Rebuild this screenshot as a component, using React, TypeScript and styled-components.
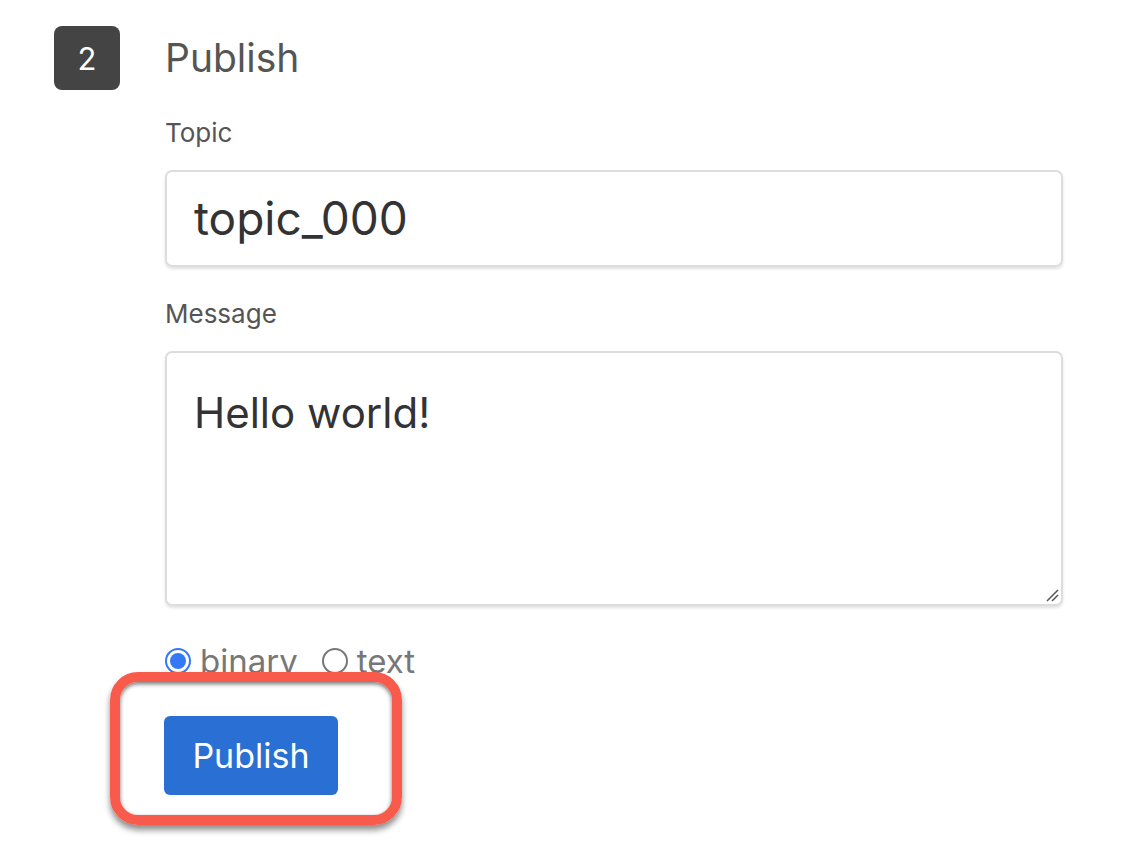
import React from 'react';
import styled, { createGlobalStyle } from 'styled-components';

const GlobalStyle = createGlobalStyle`
    body {
        margin: 0;
        background: #ffffff;
        font-family: Inter, "Noto Sans", sans-serif;
    }
`;

const Page = styled.div`
    position: relative;
    width: 1128px;
    height: 858px;
    overflow: hidden;
    background: #ffffff;
`;

const Step = styled.section`
    display: flex;
    align-items: flex-start;
    padding: 26px 0 0 54px;
`;

const Badge = styled.div`
    width: 66px;
    height: 64px;
    border-radius: 8px;
    background: #444444;
    color: #ffffff;
    font-size: 31px;
    display: flex;
    align-items: center;
    justify-content: center;
    flex-shrink: 0;
`;

const Body = styled.div`
    margin-left: 45px;
    width: 898px;
    display: flex;
    flex-direction: column;
`;

const Heading = styled.h2`
    margin: 8px 0 0;
    font-size: 39px;
    font-weight: 400;
    color: #555555;
    line-height: 48px;
`;

const Label = styled.label<{ $top: number }>`
    display: block;
    margin-top: ${({ $top }) => $top}px;
    font-size: 26px;
    color: #555555;
    line-height: 30px;
`;

const Field = styled.div<{ $height: number; $size: number }>`
    margin-top: 22px;
    height: ${({ $height }) => $height}px;
    border: 2px solid #dddddd;
    border-radius: 7px;
    box-shadow: 0 2px 3px rgba(0, 0, 0, 0.12);
    box-sizing: border-box;
    padding: 0 27px;
    font-size: ${({ $size }) => $size}px;
    color: #333333;
    position: relative;
`;

const InputText = styled.div`
    line-height: 93px;
`;

const AreaText = styled.div`
    padding-top: 36px;
    line-height: 48px;
`;

const Grip = styled.svg`
    position: absolute;
    right: 2px;
    bottom: 2px;
`;

const RadioRow = styled.div`
    margin-top: 37px;
    display: flex;
    align-items: center;
    font-size: 33px;
    color: #777777;
    line-height: 36px;
`;

const RadioOption = styled.span`
    display: flex;
    align-items: center;
    gap: 9px;
    margin-right: 24px;
`;

const RadioDot = styled.span<{ $checked?: boolean }>`
    width: 26px;
    height: 26px;
    border-radius: 50%;
    box-sizing: border-box;
    border: 2px solid ${({ $checked }) => ($checked ? '#3478f6' : '#777777')};
    display: flex;
    align-items: center;
    justify-content: center;
    &::after {
        content: '';
        display: ${({ $checked }) => ($checked ? 'block' : 'none')};
        width: 16px;
        height: 16px;
        border-radius: 50%;
        background: #3478f6;
    }
`;

const PublishButton = styled.button`
    margin-top: 37px;
    margin-left: -1px;
    align-self: flex-start;
    width: 174px;
    height: 79px;
    border: none;
    border-radius: 6px;
    background: #2a6fd3;
    color: #ffffff;
    font-family: Inter, "Noto Sans", sans-serif;
    font-size: 34px;
`;

const Highlight = styled.div`
    position: absolute;
    left: 110px;
    top: 672px;
    width: 292px;
    height: 153px;
    box-sizing: border-box;
    border: 10px solid #f85a4c;
    border-radius: 28px;
    box-shadow: 0 5px 6px rgba(0, 0, 0, 0.45), inset 0 2px 4px rgba(0, 0, 0, 0.55);
    pointer-events: none;
`;

const App: React.FC = () => {
    return (
        <Page>
            <GlobalStyle />
            <Step>
                <Badge>2</Badge>
                <Body>
                    <Heading>Publish</Heading>
                    <Label $top={36}>Topic</Label>
                    <Field $height={97} $size={46}>
                        <InputText>topic_000</InputText>
                    </Field>
                    <Label $top={32}>Message</Label>
                    <Field $height={255} $size={42}>
                        <AreaText>Hello world!</AreaText>
                        <Grip width="14" height="14" viewBox="0 0 14 14">
                            <path d="M2 13 L13 2 M7 13 L13 7" stroke="#555" strokeWidth="1.5" />
                        </Grip>
                    </Field>
                    <RadioRow>
                        <RadioOption>
                            <RadioDot $checked />
                            binary
                        </RadioOption>
                        <RadioOption>
                            <RadioDot />
                            text
                        </RadioOption>
                    </RadioRow>
                    <PublishButton>Publish</PublishButton>
                </Body>
            </Step>
            <Highlight />
        </Page>
    );
};

export default App;
